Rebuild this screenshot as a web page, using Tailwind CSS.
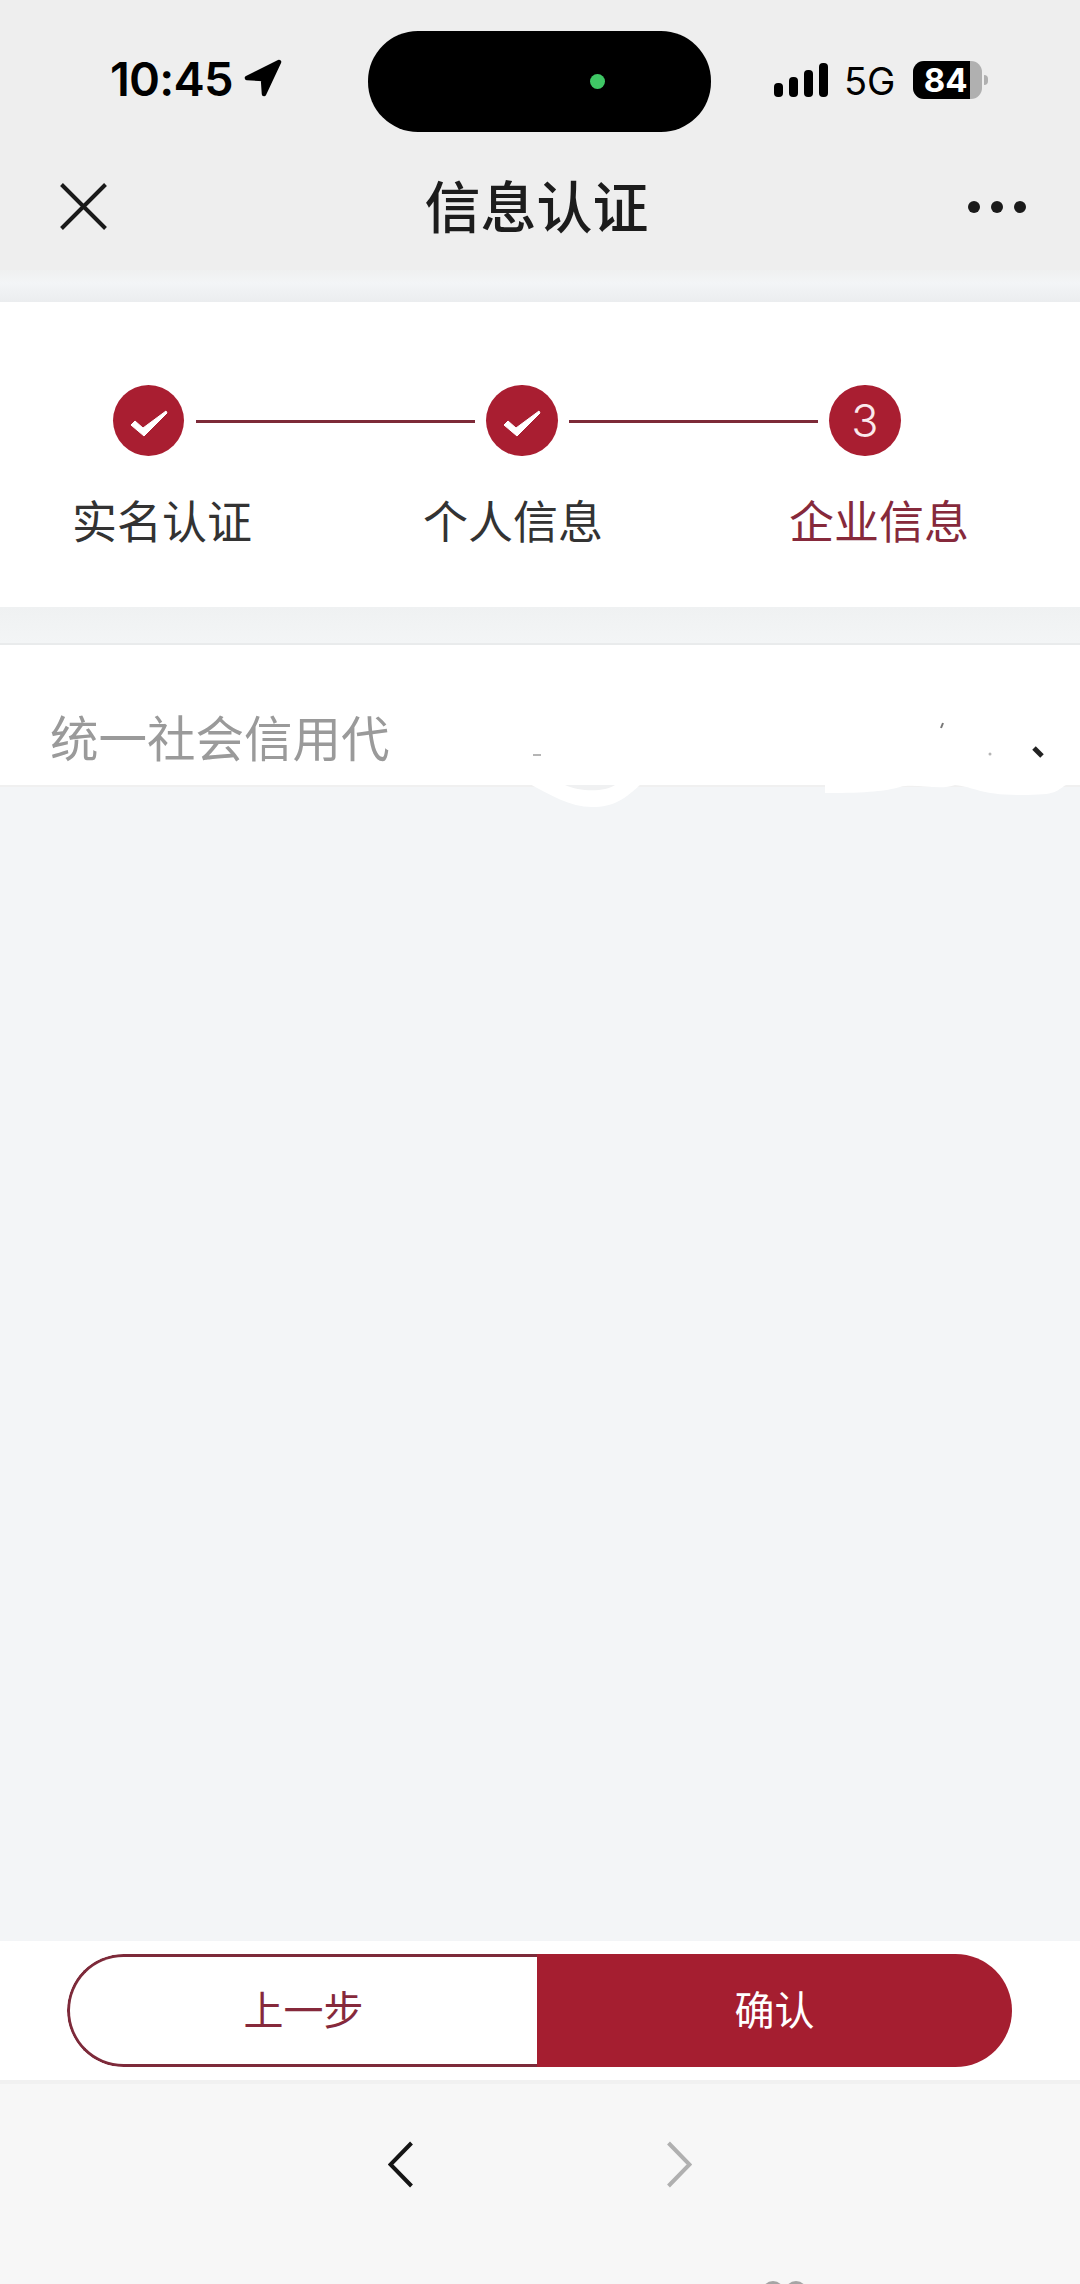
<!DOCTYPE html>
<html lang="zh-CN">
<head>
  <meta charset="UTF-8" />
  <meta name="viewport" content="width=device-width, initial-scale=1.0" />
  <title>信息认证</title>
  <script src="https://cdn.jsdelivr.net/npm/@tailwindcss/browser@4"></script>
</head>
<body class="w-[1080px] h-[2284px] overflow-hidden bg-[#f3f5f7] flex flex-col font-['Inter','Noto_Sans_CJK_SC',sans-serif]">

  <!-- status bar + title bar -->
  <header class="h-[270px] shrink-0 bg-[#eeeeee] flex flex-col">
    <div class="h-[160px] pt-[31px] pl-[110px] flex items-start">
      <div class="w-[258px] h-[70px] flex items-center mt-[12px] -mb-[12px]">
        <span class="text-[47px] leading-none font-semibold text-black tracking-[-0.8px]">10:45</span>
        <svg class="ml-[11px]" width="38" height="38" viewBox="0 0 38 38"><path d="M35 3 3 19 19 20 20 35z" fill="#000" stroke="#000" stroke-width="4.500" stroke-linejoin="round"/></svg>
      </div>
      <div class="w-[343px] h-[101px] rounded-[50px] bg-black relative">
        <span class="absolute left-[222px] top-[43px] w-[15px] h-[15px] rounded-full bg-[#3fc765]"></span>
      </div>
      <div class="ml-[63px] mt-[30px] flex items-end gap-[6px] h-[36px]">
        <span class="w-[9px] h-[14px] rounded-[4px] bg-black"></span>
        <span class="w-[9px] h-[20px] rounded-[4px] bg-black"></span>
        <span class="w-[9px] h-[27px] rounded-[4px] bg-black"></span>
        <span class="w-[9px] h-[34px] rounded-[4px] bg-black"></span>
      </div>
      <span class="ml-[16px] mt-[32px] text-[38px] leading-[36px] font-normal text-black">5G</span>
      <div class="ml-[18px] mt-[30px] flex items-center">
        <div class="w-[69px] h-[38px] rounded-[11px] overflow-hidden bg-[#b0b0b0] flex">
          <div class="w-[57px] bg-black text-white text-[33px] leading-[38px] font-bold text-right pr-[3px]">84</div>
        </div>
        <span class="ml-[2px] w-[4px] h-[10px] rounded-r-full bg-[#b0b0b0]"></span>
      </div>
    </div>
    <div class="flex-1 flex items-start justify-between pl-[60px] pr-[54px]">
      <svg class="mt-[23px]" width="47" height="47" viewBox="0 0 47 47"><path d="M1.500 1.500 45.500 45.500M45.500 1.500 1.500 45.500" stroke="#1a1a1a" stroke-width="4" fill="none"/></svg>
      <h1 class="mt-[14px] -ml-[2px] text-[56px] leading-[60px] font-medium text-[#1c1c1c] font-['Noto_Sans_CJK_SC',sans-serif]">信息认证</h1>
      <div class="mt-[41px] flex gap-[11px]">
        <span class="w-[12px] h-[12px] rounded-full bg-[#1a1a1a]"></span>
        <span class="w-[12px] h-[12px] rounded-full bg-[#1a1a1a]"></span>
        <span class="w-[12px] h-[12px] rounded-full bg-[#1a1a1a]"></span>
      </div>
    </div>
  </header>
  <div class="h-[32px] shrink-0 bg-linear-to-b from-[#eff0f0] via-[#f3f5f7] via-[40%] to-[#ebedef]"></div>

  <!-- steps -->
  <section class="h-[305px] shrink-0 bg-white pt-[83px] font-['Noto_Sans_CJK_SC',sans-serif]">
    <div class="flex items-center pl-[113px]">
      <div class="w-[71px] h-[71px] rounded-full bg-[#a91e31] flex items-center justify-center">
        <svg width="38" height="36" viewBox="0 0 38 36"><path d="M1 22 5 18 13 25 36 8 37 10 14 33z" fill="#fff" stroke="#fff" stroke-width="1" stroke-linejoin="round"/></svg>
      </div>
      <span class="ml-[12px] mt-[2px] w-[279px] h-[3px] bg-[#7d2a38]"></span>
      <div class="ml-[11px] w-[72px] h-[71px] rounded-full bg-[#a91e31] flex items-center justify-center">
        <svg width="38" height="36" viewBox="0 0 38 36"><path d="M1 22 5 18 13 25 36 8 37 10 14 33z" fill="#fff" stroke="#fff" stroke-width="1" stroke-linejoin="round"/></svg>
      </div>
      <span class="ml-[11px] mt-[2px] w-[249px] h-[3px] bg-[#7d2a38]"></span>
      <div class="ml-[11px] w-[72px] h-[71px] rounded-full bg-[#a91e31] flex items-center justify-center text-[#fbe9ec] text-[45px] leading-none font-light font-['Inter',sans-serif]">3</div>
    </div>
    <div class="mt-[38px] flex text-[45px] leading-[52px] text-[#333333]">
      <span class="ml-[72px] w-[351px]">实名认证</span>
      <span class="w-[366px]">个人信息</span>
      <span class="text-[#86293b]">企业信息</span>
    </div>
  </section>
  <div class="h-[38px] shrink-0 bg-linear-to-b from-[#eff1f2] to-[#f3f5f6] border-b-[2px] border-[#e9ebec]"></div>

  <!-- form row, partly painted out in the source -->
  <section class="relative h-[140px] shrink-0 bg-white pt-[63px] pl-[50px] font-['Noto_Sans_CJK_SC',sans-serif]">
    <span class="block text-[48.500px] leading-[56px] text-[#9a9a9a]">统一社会信用代</span>
    <svg class="absolute left-[500px] top-[68px]" width="580" height="100" viewBox="0 0 580 100">
      <path d="M28 70C50 82 70 94 92 94S125 86 142 70z" fill="#fff"/>
      <path d="M65 72H115C105 79 80 79 65 72z" fill="#f0f1f2"/>
      <path d="M325 70V80C370 80 385 78 400 74S440 78 455 72C475 74 480 82 520 82S555 78 566 72H580V70z" fill="#fff"/>
      <path d="M33 42H41" stroke="#b5b5b5" stroke-width="2"/>
      <path d="M443 10 441 15" stroke="#777777" stroke-width="2"/>
      <circle cx="490" cy="41" r="1.500" fill="#b5b5b5"/>
      <path d="M534 35 542 43" stroke="#222222" stroke-width="5"/>
    </svg>
  </section>

  <main class="flex-1 bg-[#f3f5f7] border-t-[2px] border-[#f0f0f0]"></main>

  <!-- step buttons -->
  <section class="h-[139px] shrink-0 bg-white pt-[13px] pl-[67px] font-['Noto_Sans_CJK_SC',sans-serif]">
    <div class="w-[945px] h-[113px] flex rounded-[57px] overflow-hidden">
      <div class="w-[470px] rounded-l-[57px] border-[3px] border-r-0 border-[#7d2a3a] bg-white flex items-center justify-center pb-[5px] text-[40px] text-[#86293b]">上一步</div>
      <div class="flex-1 bg-[#a51e30] flex items-center justify-center pb-[5px] text-[40px] text-white">确认</div>
    </div>
  </section>

  <!-- browser toolbar, with the top of a cropped watermark at the bottom edge -->
  <footer class="relative h-[204px] shrink-0 bg-[#f7f7f7] border-t-[4px] border-[#f1f1f1] pt-[57px] flex">
    <svg class="ml-[388px]" width="26" height="47" viewBox="0 0 26 47"><path d="M23.500 2 2.500 23.500 23.500 45" stroke="#151515" stroke-width="4" fill="none"/></svg>
    <svg class="ml-[252px]" width="26" height="47" viewBox="0 0 26 47"><path d="M2.500 2 23.500 23.500 2.500 45" stroke="#b0b0b0" stroke-width="4" fill="none"/></svg>
    <span class="absolute left-[762px] top-[197px] w-[22px] h-[22px] rounded-full bg-[#a5a5a5]"></span>
    <span class="absolute left-[785px] top-[197px] w-[22px] h-[22px] rounded-full bg-[#a5a5a5]"></span>
  </footer>
</body>
</html>
